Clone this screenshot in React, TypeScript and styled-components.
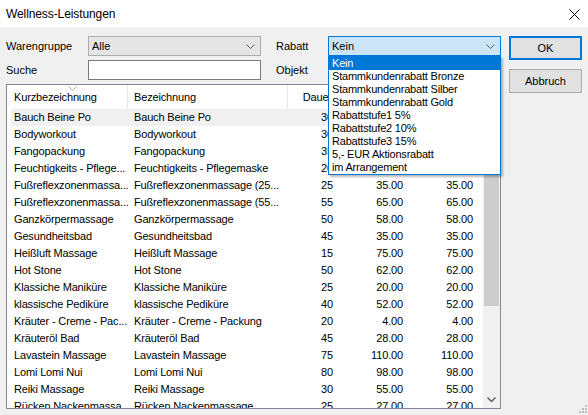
import React from 'react';
import styled, { createGlobalStyle } from 'styled-components';

const GlobalStyle = createGlobalStyle`
  html, body {
    margin: 0;
    padding: 0;
    background: #f0f0f0;
  }
  body {
    font-family: "Liberation Sans", Arial, sans-serif;
    font-size: 11px;
    color: #000;
  }
`;

const Window = styled.div`
  position: relative;
  width: 588px;
  height: 415px;
  overflow: hidden;
  background: #f0f0f0;
`;

const TitleBar = styled.div`
  height: 27px;
  background: #ffffff;
  display: flex;
  align-items: center;
  justify-content: space-between;
  padding: 0 7px 0 6px;
  box-sizing: border-box;
`;

const Title = styled.span`
  font-size: 12px;
  letter-spacing: -0.1px;
  color: #000;
  padding-top: 1px;
`;

const CloseButton = styled.div`
  width: 14px;
  height: 14px;
  display: flex;
  align-items: center;
  justify-content: center;
  margin-top: 2px;
`;

const Body = styled.div`
  display: grid;
  grid-template-columns: 495px 73px;
  column-gap: 8px;
  padding: 9px 6px 0 6px;
`;

const LeftColumn = styled.div`
  display: flex;
  flex-direction: column;
  gap: 4px;
`;

const FormGrid = styled.div`
  display: grid;
  grid-template-columns: 82px 173px 15px 52px 173px;
  grid-auto-rows: 20px;
  row-gap: 4px;
  align-items: center;
`;

const Label = styled.span<{ $col: number }>`
  grid-column: ${p => p.$col};
  line-height: 20px;
`;

const ComboWrap = styled.div<{ $col: number }>`
  grid-column: ${p => p.$col};
  position: relative;
  height: 20px;
`;

const Combo = styled.div<{ $focused?: boolean }>`
  height: 20px;
  box-sizing: border-box;
  border: 1px solid ${p => (p.$focused ? '#0078d7' : '#adadad')};
  background: ${p => (p.$focused ? '#cce4f7' : '#e5e5e5')};
  display: flex;
  align-items: center;
  justify-content: space-between;
  padding: 0 5px 0 3px;
`;

const TextBox = styled.div<{ $col: number }>`
  grid-column: ${p => p.$col};
  height: 20px;
  box-sizing: border-box;
  border: 1px solid #7a7a7a;
  background: #fff;
`;

const DropList = styled.div`
  position: absolute;
  left: 0;
  top: 20px;
  width: 100%;
  box-sizing: border-box;
  border: 1px solid #0078d7;
  background: #fff;
  z-index: 10;
  box-shadow: 2px 2px 2px rgba(0, 0, 0, 0.28);
`;

const DropItem = styled.div<{ $selected?: boolean }>`
  height: 13px;
  line-height: 13px;
  padding-left: 3px;
  letter-spacing: -0.2px;
  white-space: nowrap;
  background: ${p => (p.$selected ? '#0078d7' : 'transparent')};
  color: ${p => (p.$selected ? '#fff' : '#000')};
`;

const ListView = styled.div`
  height: 325px;
  box-sizing: border-box;
  border: 1px solid #828790;
  background: #fff;
  display: flex;
  overflow: hidden;
`;

const ListContent = styled.div`
  flex: 1;
  overflow: hidden;
  letter-spacing: -0.15px;
`;

const HeaderRow = styled.div`
  position: relative;
  display: grid;
  grid-template-columns: 121px 160px 51px 70px 70px 1fr;
  height: 24px;
`;

const HeaderCell = styled.div<{ $right?: boolean }>`
  box-sizing: border-box;
  border-right: 1px solid #e5e5e5;
  line-height: 24px;
  padding: ${p => (p.$right ? '0 6px 0 0' : '0 0 0 6px')};
  text-align: ${p => (p.$right ? 'right' : 'left')};
  white-space: nowrap;
  overflow: hidden;

  &:first-child {
    padding-left: 7px;
  }
  &:last-child {
    border-right: none;
  }
`;

const SortArrow = styled.svg`
  position: absolute;
  left: 61px;
  top: 1px;
`;

const Row = styled.div<{ $selected?: boolean }>`
  display: grid;
  grid-template-columns: 117px 160px 51px 70px 70px 1fr;
  height: 17px;
  margin-left: 4px;
  background: ${p => (p.$selected ? '#f0f0f0' : 'transparent')};
`;

const Cell = styled.div<{ $right?: boolean }>`
  line-height: 17px;
  white-space: nowrap;
  overflow: hidden;
  padding: ${p => (p.$right ? '0 6px 0 0' : '0 0 0 6px')};
  text-align: ${p => (p.$right ? 'right' : 'left')};

  &:first-child {
    padding-left: 3px;
  }
`;

const ScrollBar = styled.div`
  width: 17px;
  background: #f0f0f0;
  display: flex;
  flex-direction: column;
`;

const ScrollArrow = styled.div`
  height: 17px;
  display: flex;
  align-items: center;
  justify-content: center;
`;

const ScrollThumb = styled.div`
  height: 204px;
  margin: 0 1px;
  background: #cdcdcd;
`;

const ScrollTrack = styled.div`
  flex: 1;
`;

const ButtonColumn = styled.div`
  display: flex;
  flex-direction: column;
  gap: 9px;
`;

const Button = styled.div<{ $default?: boolean }>`
  height: 24px;
  box-sizing: border-box;
  background: #e1e1e1;
  border: ${p => (p.$default ? '2px solid #0078d7' : '1px solid #adadad')};
  display: flex;
  align-items: center;
  justify-content: center;
`;

const Grip = styled.svg`
  position: absolute;
  right: 1px;
  bottom: 1px;
`;

const Chevron: React.FC<{ color?: string }> = ({ color = '#606060' }) => (
  <svg width="9" height="5" viewBox="0 0 9 5">
    <path d="M0.5 0.5 L4.5 4.5 L8.5 0.5" fill="none" stroke={color} strokeWidth="1" />
  </svg>
);

const discounts = [
  'Kein',
  'Stammkundenrabatt Bronze',
  'Stammkundenrabatt Silber',
  'Stammkundenrabatt Gold',
  'Rabattstufe1 5%',
  'Rabattstufe2 10%',
  'Rabattstufe3 15%',
  '5,- EUR Aktionsrabatt',
  'im Arrangement',
];

type Service = [string, string, string, string, string];

const services: Service[] = [
  ['Bauch Beine Po', 'Bauch Beine Po', '30', '25.00', '25.00'],
  ['Bodyworkout', 'Bodyworkout', '30', '25.00', '25.00'],
  ['Fangopackung', 'Fangopackung', '35', '30.00', '30.00'],
  ['Feuchtigkeits - Pflege...', 'Feuchtigkeits - Pflegemaske', '20', '18.00', '18.00'],
  ['Fußreflexzonenmassa...', 'Fußreflexzonenmassage (25...', '25', '35.00', '35.00'],
  ['Fußreflexzonenmassa...', 'Fußreflexzonenmassage (55...', '55', '65.00', '65.00'],
  ['Ganzkörpermassage', 'Ganzkörpermassage', '50', '58.00', '58.00'],
  ['Gesundheitsbad', 'Gesundheitsbad', '45', '35.00', '35.00'],
  ['Heißluft Massage', 'Heißluft Massage', '15', '75.00', '75.00'],
  ['Hot Stone', 'Hot Stone', '50', '62.00', '62.00'],
  ['Klassiche Maniküre', 'Klassiche Maniküre', '25', '20.00', '20.00'],
  ['klassische Pediküre', 'klassische Pediküre', '40', '52.00', '52.00'],
  ['Kräuter - Creme - Pac...', 'Kräuter - Creme - Packung', '20', '4.00', '4.00'],
  ['Kräuteröl Bad', 'Kräuteröl Bad', '45', '28.00', '28.00'],
  ['Lavastein Massage', 'Lavastein Massage', '75', '110.00', '110.00'],
  ['Lomi Lomi Nui', 'Lomi Lomi Nui', '80', '98.00', '98.00'],
  ['Reiki Massage', 'Reiki Massage', '30', '55.00', '55.00'],
  ['Rücken Nackenmassa...', 'Rücken Nackenmassage', '25', '27.00', '27.00'],
];

const App: React.FC = () => {
  return (
    <Window>
      <GlobalStyle />
      <TitleBar>
        <Title>Wellness-Leistungen</Title>
        <CloseButton>
          <svg width="11" height="11" viewBox="0 0 11 11">
            <path d="M0.5 0.5 L10.5 10.5 M10.5 0.5 L0.5 10.5" stroke="#000" strokeWidth="1" />
          </svg>
        </CloseButton>
      </TitleBar>

      <Body>
        <LeftColumn>
          <FormGrid>
            <Label $col={1}>Warengruppe</Label>
            <ComboWrap $col={2}>
              <Combo>
                <span>Alle</span>
                <Chevron />
              </Combo>
            </ComboWrap>
            <Label $col={4}>Rabatt</Label>
            <ComboWrap $col={5}>
              <Combo $focused>
                <span>Kein</span>
                <Chevron />
              </Combo>
              <DropList>
                {discounts.map((d, i) => (
                  <DropItem key={d} $selected={i === 0}>
                    {d}
                  </DropItem>
                ))}
              </DropList>
            </ComboWrap>

            <Label $col={1}>Suche</Label>
            <TextBox $col={2} />
            <Label $col={4}>Objekt</Label>
            <ComboWrap $col={5}>
              <Combo>
                <span />
                <Chevron />
              </Combo>
            </ComboWrap>
          </FormGrid>

          <ListView>
            <ListContent>
              <HeaderRow>
                <HeaderCell>Kurzbezeichnung</HeaderCell>
                <HeaderCell>Bezeichnung</HeaderCell>
                <HeaderCell $right>Dauer</HeaderCell>
                <HeaderCell $right>Preis</HeaderCell>
                <HeaderCell $right>Gesamt</HeaderCell>
                <HeaderCell />
                <SortArrow width="9" height="5" viewBox="0 0 9 5">
                  <path d="M0.5 0.5 L4.5 4.5 L8.5 0.5" fill="none" stroke="#a8a8a8" strokeWidth="1" />
                </SortArrow>
              </HeaderRow>
              {services.map((s, i) => (
                <Row key={i} $selected={i === 0}>
                  <Cell>{s[0]}</Cell>
                  <Cell>{s[1]}</Cell>
                  <Cell $right>{s[2]}</Cell>
                  <Cell $right>{s[3]}</Cell>
                  <Cell $right>{s[4]}</Cell>
                  <Cell />
                </Row>
              ))}
            </ListContent>
            <ScrollBar>
              <ScrollArrow>
                <svg width="9" height="5" viewBox="0 0 9 5">
                  <path d="M0.5 4.5 L4.5 0.5 L8.5 4.5" fill="none" stroke="#606060" strokeWidth="1.5" />
                </svg>
              </ScrollArrow>
              <ScrollThumb />
              <ScrollTrack />
              <ScrollArrow>
                <svg width="9" height="5" viewBox="0 0 9 5">
                  <path d="M0.5 0.5 L4.5 4.5 L8.5 0.5" fill="none" stroke="#606060" strokeWidth="1.5" />
                </svg>
              </ScrollArrow>
            </ScrollBar>
          </ListView>
        </LeftColumn>

        <ButtonColumn>
          <Button $default>OK</Button>
          <Button>Abbruch</Button>
        </ButtonColumn>
      </Body>

      <Grip width="10" height="10" viewBox="0 0 10 10">
        {[
          [8, 0], [8, 3], [5, 3], [8, 6], [5, 6], [2, 6],
        ].map(([x, y], i) => (
          <rect key={i} x={x} y={y + 1} width="2" height="2" fill="#bcbcbc" />
        ))}
      </Grip>
    </Window>
  );
};

export default App;
